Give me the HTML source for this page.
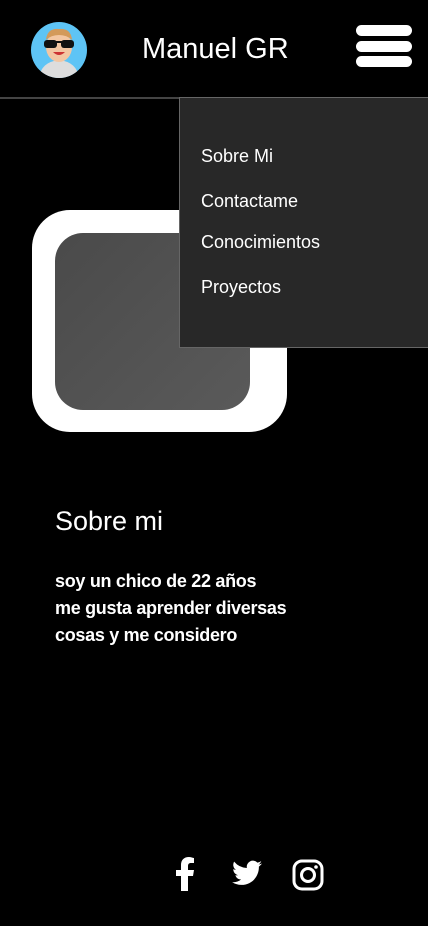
<!DOCTYPE html>
<html><head><meta charset="utf-8"><style>
body{margin:0;width:428px;height:926px;background:#000;position:relative;overflow:hidden;font-family:"Liberation Sans",sans-serif;color:#fff}
.a{position:absolute}
.bar{position:absolute;left:356px;width:56px;height:11px;border-radius:6px;background:#fff}
.m{position:absolute;left:201px;font-size:18px;color:#fff}
</style></head><body>
<svg class="a" style="left:31px;top:22px" width="56" height="56" viewBox="0 0 56 56">
<defs><clipPath id="c"><circle cx="28" cy="28" r="28"/></clipPath></defs>
<g clip-path="url(#c)">
<rect width="56" height="56" fill="#5ec4f5"/>
<path d="M8 56 Q10 40 28 38 Q46 40 48 56Z" fill="#ddd"/>
<ellipse cx="28" cy="25" rx="13" ry="15" fill="#f3c6a2"/>
<path d="M15 18 Q16 6 28 7 Q40 6 41 18 Q36 13 28 13 Q20 13 15 18Z" fill="#d39a5b"/>
<rect x="13" y="18" width="13" height="8" rx="3" fill="#111"/>
<rect x="30" y="18" width="13" height="8" rx="3" fill="#111"/>
<rect x="25" y="19" width="6" height="2" fill="#111"/>
<path d="M22 30 Q28 36 34 30Z" fill="#c33"/>
</g></svg>
<div class="a" style="left:142px;top:33px;font-size:29px">Manuel GR</div>
<div class="bar" style="top:25px"></div>
<div class="bar" style="top:41px"></div>
<div class="bar" style="top:56px"></div>
<div class="a" style="left:0;top:97px;width:180px;height:2px;background:#444"></div>
<div class="a" style="left:32px;top:210px;width:255px;height:222px;border-radius:38px;background:#fff"></div>
<div class="a" style="left:55px;top:233px;width:195px;height:177px;border-radius:28px;background:linear-gradient(135deg,#4a4a4a,#5a5a5a)"></div>
<div class="a" style="left:179px;top:97px;width:248px;height:249px;background:#282828;border:1px solid #666"></div>
<div class="m" style="top:146px">Sobre Mi</div>
<div class="m" style="top:191px">Contactame</div>
<div class="m" style="top:232px">Conocimientos</div>
<div class="m" style="top:277px">Proyectos</div>
<div class="a" style="left:55px;top:506px;font-size:27px">Sobre mi</div>
<div class="a" style="left:55px;top:568px;font-size:18px;font-weight:bold;line-height:27px;letter-spacing:-0.3px">soy un chico de 22 años<br>me gusta aprender diversas<br>cosas y me considero</div>
<svg class="a" style="left:174px;top:857px" width="22" height="34" viewBox="0 0 22 34"><path d="M14 34V19h5l1-6h-6V9c0-2 1-3 3-3h3V1c-1 0-3-1-5-1-5 0-8 3-8 8v5H2v6h5v15z" fill="#fff"/></svg>
<svg class="a" style="left:232px;top:860px" width="30" height="26" viewBox="0 0 24 20"><path d="M24 2.4c-.9.4-1.8.6-2.8.8 1-.6 1.8-1.6 2.2-2.7-1 .6-2 1-3.1 1.2A4.9 4.9 0 0 0 11.9 6 14 14 0 0 1 1.7.9a4.9 4.9 0 0 0 1.5 6.6c-.8 0-1.600-.300-2.200-.600 0 2.400 1.700 4.400 3.900 4.800-.7.2-1.5.2-2.2.1.6 2 2.4 3.4 4.6 3.4A9.9 9.9 0 0 1 0 17.3 14 14 0 0 0 7.500 19.500c9.100 0 14-7.500 14-14v-.6c1-.7 1.800-1.600 2.500-2.500z" fill="#fff"/></svg>
<svg class="a" style="left:292px;top:859px" width="32" height="32" viewBox="0 0 32 32"><rect x="2" y="2" width="28" height="28" rx="8" fill="none" stroke="#fff" stroke-width="3"/><circle cx="16" cy="16" r="6.5" fill="none" stroke="#fff" stroke-width="3"/><circle cx="24" cy="8" r="1.8" fill="#fff"/></svg>
</body></html>
